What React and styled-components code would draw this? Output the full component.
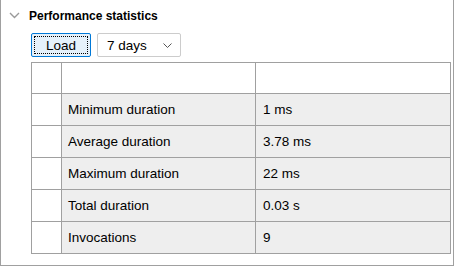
import React from "react";
import styled, { createGlobalStyle } from "styled-components";

const GlobalStyle = createGlobalStyle`
    html, body {
        margin: 0;
        padding: 0;
        background: #ffffff;
    }
    body {
        font-family: "Liberation Sans", Arial, sans-serif;
        color: #000000;
    }
`;

const Panel = styled.div`
    box-sizing: border-box;
    width: 454px;
    height: 266px;
    border: 1px solid #a0a0a0;
    border-top: none;
    background: #ffffff;
`;

const Header = styled.div`
    display: flex;
    align-items: center;
    height: 31px;
    padding-left: 8px;
    gap: 9px;
`;

const Title = styled.span`
    font-size: 12px;
    font-weight: bold;
`;

const Toolbar = styled.div`
    display: flex;
    align-items: center;
    gap: 6px;
    padding-left: 30px;
    height: 24px;
    margin-top: 2px;
`;

const LoadButton = styled.button`
    box-sizing: border-box;
    width: 60px;
    height: 24px;
    border: 1px solid #0078d7;
    border-radius: 2px;
    background: #e5f1fb;
    font-family: "Liberation Sans", Arial, sans-serif;
    font-size: 13.5px;
    padding: 2px;
    color: #000;
    span {
        display: flex;
        align-items: center;
        justify-content: center;
        height: 100%;
        border: 1px dotted #000;
        box-sizing: border-box;
    }
`;

const Select = styled.div`
    box-sizing: border-box;
    width: 84px;
    height: 24px;
    border: 1px solid #cccccc;
    border-radius: 2px;
    display: flex;
    align-items: center;
    justify-content: space-between;
    padding: 0 8px 0 9px;
    font-size: 13.5px;
`;

const Table = styled.table`
    border-collapse: collapse;
    margin: 5px 0 0 30px;
    width: 420px;
    font-size: 13.5px;
    td {
        border: 1px solid #a0a0a0;
        padding: 0 0 0 6px;
        box-sizing: border-box;
    }
`;

const Row = styled.tr`
    td {
        height: ${(p) => (p.$head ? "31px" : "32px")};
        background: ${(p) => (p.$head ? "#ffffff" : "#eeeeee")};
    }
    td:first-child {
        background: #ffffff;
        width: 30px;
        padding: 0;
    }
    td:nth-child(2) {
        width: 194px;
    }
    td:nth-child(3) {
        padding-left: 7px;
    }
`;

const Chevron = ({ color = "#9a9a9a" }) => (
    <svg width="11" height="7" viewBox="0 0 11 7">
        <path d="M1 1 L5.5 5.5 L10 1" fill="none" stroke={color} strokeWidth="1.4" />
    </svg>
);

const stats = [
    ["Minimum duration", "1 ms"],
    ["Average duration", "3.78 ms"],
    ["Maximum duration", "22 ms"],
    ["Total duration", "0.03 s"],
    ["Invocations", "9"],
];

export default function App() {
    return (
        <>
            <GlobalStyle />
            <Panel>
                <Header>
                    <Chevron />
                    <Title>Performance statistics</Title>
                </Header>
                <Toolbar>
                    <LoadButton>
                        <span>Load</span>
                    </LoadButton>
                    <Select>
                        <span>7 days</span>
                        <svg width="9" height="5" viewBox="0 0 9 5">
                            <path d="M0.5 0.5 L4.5 4.5 L8.5 0.5" fill="none" stroke="#555" strokeWidth="1" />
                        </svg>
                    </Select>
                </Toolbar>
                <Table>
                    <tbody>
                        <Row $head>
                            <td></td>
                            <td></td>
                            <td></td>
                        </Row>
                        {stats.map(([name, value]) => (
                            <Row key={name}>
                                <td></td>
                                <td>{name}</td>
                                <td>{value}</td>
                            </Row>
                        ))}
                    </tbody>
                </Table>
            </Panel>
        </>
    );
}
